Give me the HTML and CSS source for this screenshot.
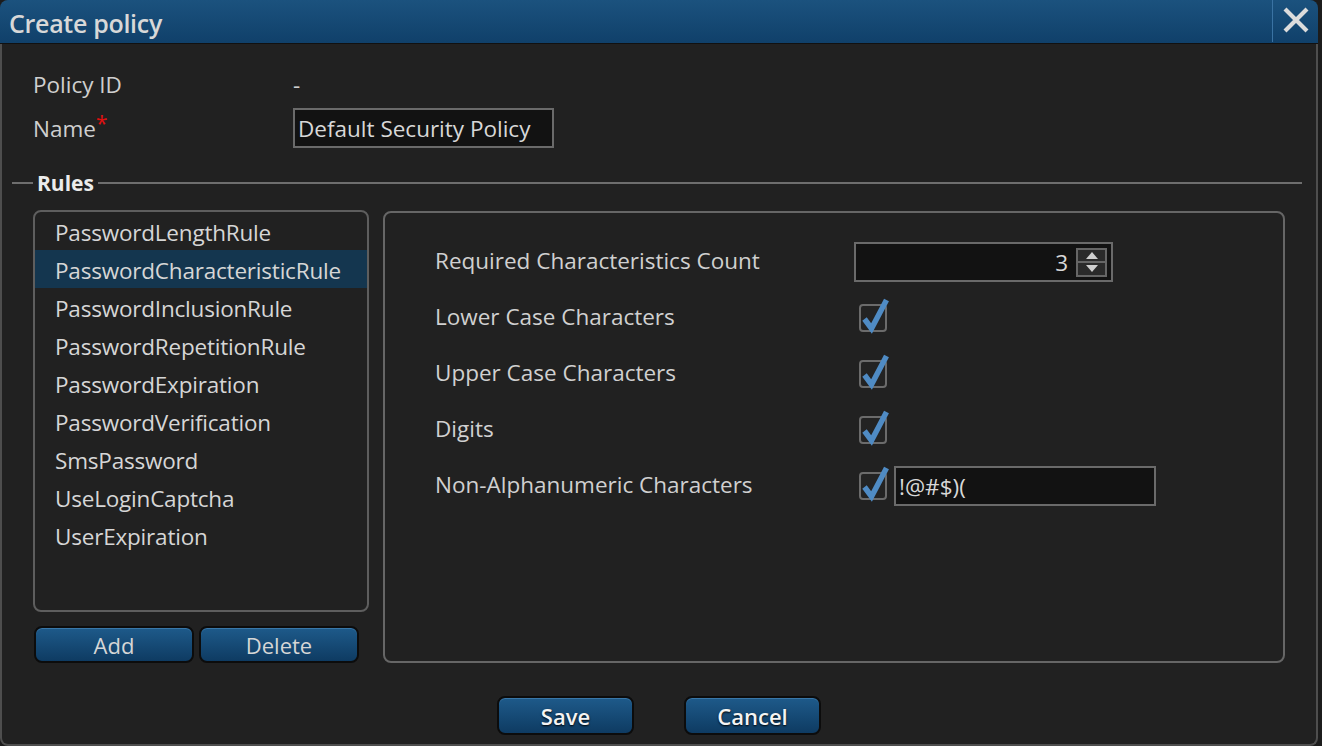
FILE: index.html
```html
<!DOCTYPE html>
<html>
<head>
<meta charset="utf-8">
<link rel="stylesheet" href="styles.css">
</head>
<body>
<div class="window">
  <div class="titlebar">
    <div class="title">Create policy</div>
    <div class="close">
      <svg width="28" height="28" viewBox="0 0 28 28"><path d="M3 3 L25 25 M25 3 L3 25" stroke="#dcdcdc" stroke-width="4.2" stroke-linecap="butt"/></svg>
    </div>
  </div>
  <div class="body">
    <div class="form">
      <div class="row"><div class="lbl">Policy ID</div><div class="val">-</div></div>
      <div class="row"><div class="lbl">Name<span class="req">*</span></div><div class="input name-input">Default Security Policy</div></div>
    </div>
    <div class="rules-head"><span class="legend">Rules</span></div>
    <div class="rules">
      <div class="left-col">
        <div class="list">
          <div class="item">PasswordLengthRule</div>
          <div class="item sel">PasswordCharacteristicRule</div>
          <div class="item">PasswordInclusionRule</div>
          <div class="item">PasswordRepetitionRule</div>
          <div class="item">PasswordExpiration</div>
          <div class="item">PasswordVerification</div>
          <div class="item">SmsPassword</div>
          <div class="item">UseLoginCaptcha</div>
          <div class="item">UserExpiration</div>
        </div>
        <div class="list-btns">
          <div class="btn small">Add</div>
          <div class="btn small">Delete</div>
        </div>
      </div>
      <div class="panel">
        <div class="prow">
          <div class="plbl">Required Characteristics Count</div>
          <div class="input spin">
            <span class="num">3</span>
            <div class="spinbtns">
              <div class="sb"><svg width="12" height="7" viewBox="0 0 12 7"><path d="M6 0 L12 7 L0 7 Z" fill="#cfcfcf"/></svg></div>
              <div class="sb"><svg width="12" height="7" viewBox="0 0 12 7"><path d="M0 0 L12 0 L6 7 Z" fill="#cfcfcf"/></svg></div>
            </div>
          </div>
        </div>
        <div class="prow">
          <div class="plbl">Lower Case Characters</div>
          <div class="ctl"><svg class="chk" width="32" height="36" viewBox="0 0 32 36"><rect x="1" y="7" width="26" height="26" rx="3" fill="#232323" stroke="#6b6b6b" stroke-width="2"/><path d="M5.5 21 L12.5 30.5 L27.5 2" fill="none" stroke="#4f8bc4" stroke-width="5.5" stroke-linejoin="miter"/></svg></div>
        </div>
        <div class="prow">
          <div class="plbl">Upper Case Characters</div>
          <div class="ctl"><svg class="chk" width="32" height="36" viewBox="0 0 32 36"><rect x="1" y="7" width="26" height="26" rx="3" fill="#232323" stroke="#6b6b6b" stroke-width="2"/><path d="M5.5 21 L12.5 30.5 L27.5 2" fill="none" stroke="#4f8bc4" stroke-width="5.5" stroke-linejoin="miter"/></svg></div>
        </div>
        <div class="prow">
          <div class="plbl">Digits</div>
          <div class="ctl"><svg class="chk" width="32" height="36" viewBox="0 0 32 36"><rect x="1" y="7" width="26" height="26" rx="3" fill="#232323" stroke="#6b6b6b" stroke-width="2"/><path d="M5.5 21 L12.5 30.5 L27.5 2" fill="none" stroke="#4f8bc4" stroke-width="5.5" stroke-linejoin="miter"/></svg></div>
        </div>
        <div class="prow">
          <div class="plbl">Non-Alphanumeric Characters</div>
          <div class="ctl"><svg class="chk" width="32" height="36" viewBox="0 0 32 36"><rect x="1" y="7" width="26" height="26" rx="3" fill="#232323" stroke="#6b6b6b" stroke-width="2"/><path d="M5.5 21 L12.5 30.5 L27.5 2" fill="none" stroke="#4f8bc4" stroke-width="5.5" stroke-linejoin="miter"/></svg><div class="input chars">!@#$)(</div></div>
        </div>
      </div>
    </div>
    <div class="footer">
      <div class="btn big">Save</div>
      <div class="btn big">Cancel</div>
    </div>
  </div>
</div>
</body>
</html>
```

FILE: styles.css
```css
* { box-sizing: border-box; }
html, body { margin: 0; padding: 0; }
body {
  background: #1c1c1c;
  font-family: "Open Sans", "Noto Sans", sans-serif;
  color: #d4d4d4;
  width: 1322px;
  height: 746px;
  overflow: hidden;
}
.window {
  width: 1318px;
  height: 746px;
  display: flex;
  flex-direction: column;
}
.titlebar {
  height: 44px;
  flex: none;
  background: linear-gradient(#1b527e, #10406a);
  border-radius: 8px 8px 0 0;
  display: flex;
  align-items: center;
  border-bottom: 1px solid #111;
}
.title {
  flex: 1;
  padding-left: 9px;
  padding-top: 3px;
  font-size: 25px;
  font-weight: 600;
  color: #d8d8d8;
  letter-spacing: -0.3px;
}
.close {
  width: 46px;
  height: 42px;
  align-self: flex-start;
  border-left: 1px solid #3a73a3;
  display: flex;
  align-items: center;
  justify-content: center;
  padding-bottom: 2px;
}
.body {
  flex: 1;
  background: #212121;
  border: 2px solid #4e4e4e;
  border-top: none;
  border-radius: 0 0 8px 8px;
  display: flex;
  flex-direction: column;
}
.form {
  padding: 20px 0 0 31px;
  display: flex;
  flex-direction: column;
  gap: 4px;
}
.row {
  display: flex;
  align-items: center;
  height: 40px;
  font-size: 22.5px;
}
.lbl { width: 260px; color: #cfcfcf; }
.val { color: #cfcfcf; }
.req { color: #e01010; position: relative; top: -6px; font-size: 21px; }
.input {
  background: #121212;
  border: 2px solid #6a6a6a;
  color: #d8d8d8;
  font-size: 22.5px;
}
.name-input {
  width: 261px;
  height: 40px;
  padding-left: 3px;
  display: flex;
  align-items: center;
}
.rules-head {
  display: flex;
  align-items: center;
  margin: 22px 14px 0 10px;
  height: 26px;
}
.rules-head::before {
  content: "";
  width: 21px;
  height: 2px;
  background: #6e6e6e;
}
.rules-head::after {
  content: "";
  flex: 1;
  height: 2px;
  background: #6e6e6e;
}
.legend {
  font-size: 21px;
  font-weight: 700;
  color: #ececec;
  padding: 0 4px;
}
.rules {
  display: flex;
  gap: 14px;
  padding: 14px 0 0 31px;
}
.left-col {
  width: 336px;
  display: flex;
  flex-direction: column;
  gap: 14px;
}
.list {
  height: 402px;
  border: 2px solid #5e5e5e;
  border-radius: 8px;
  overflow: hidden;
}
.item {
  height: 38px;
  display: flex;
  align-items: center;
  padding-left: 20px;
  padding-top: 2px;
  font-size: 22.5px;
  color: #d6d6d6;
  letter-spacing: -0.2px;
}
.item.sel { background: #14364f; }
.list-btns {
  display: flex;
  gap: 5px;
  padding-left: 1px;
}
.btn {
  background: linear-gradient(#1e5a8a, #0e3b62);
  border: 2px solid #0c0c0c;
  border-radius: 8px;
  box-shadow: inset 0 1px 0 #3a77a8;
  display: flex;
  align-items: center;
  justify-content: center;
  color: #d6d6d6;
}
.btn.small {
  width: 160px;
  height: 37px;
  font-size: 22px;
}
.panel {
  width: 902px;
  height: 452px;
  margin-top: 1px;
  border: 2px solid #666;
  border-radius: 8px;
  padding: 21px 0 0 50px;
  display: flex;
  flex-direction: column;
}
.prow {
  height: 56px;
  display: flex;
  align-items: center;
}
.plbl {
  width: 419px;
  font-size: 22.5px;
  color: #d0d0d0;
  position: relative;
  top: -2px;
}
.spin {
  width: 259px;
  height: 40px;
  display: flex;
  align-items: center;
  justify-content: flex-end;
  padding-right: 4px;
}
.num { margin-right: 8px; }
.spinbtns {
  display: flex;
  flex-direction: column;
  width: 31px;
  height: 29px;
  border: 2px solid #666;
  background: #666;
}
.sb {
  flex: 1;
  background: #2a2a2a;
  display: flex;
  align-items: center;
  justify-content: center;
}
.sb + .sb { margin-top: 2px; }
.ctl {
  display: flex;
  align-items: center;
  gap: 3px;
  padding-left: 5px;
}
.chk { display: block; margin-top: -4px; }
.chars {
  width: 262px;
  height: 40px;
  display: flex;
  align-items: center;
  padding-left: 3px;
}
.footer {
  display: flex;
  justify-content: center;
  gap: 50px;
  margin-top: 33px;
}
.btn.big {
  width: 137px;
  height: 39px;
  font-size: 22px;
  font-weight: 600;
  color: #f4f4f4;
  text-shadow: 0 1px 2px #000;
}
```
